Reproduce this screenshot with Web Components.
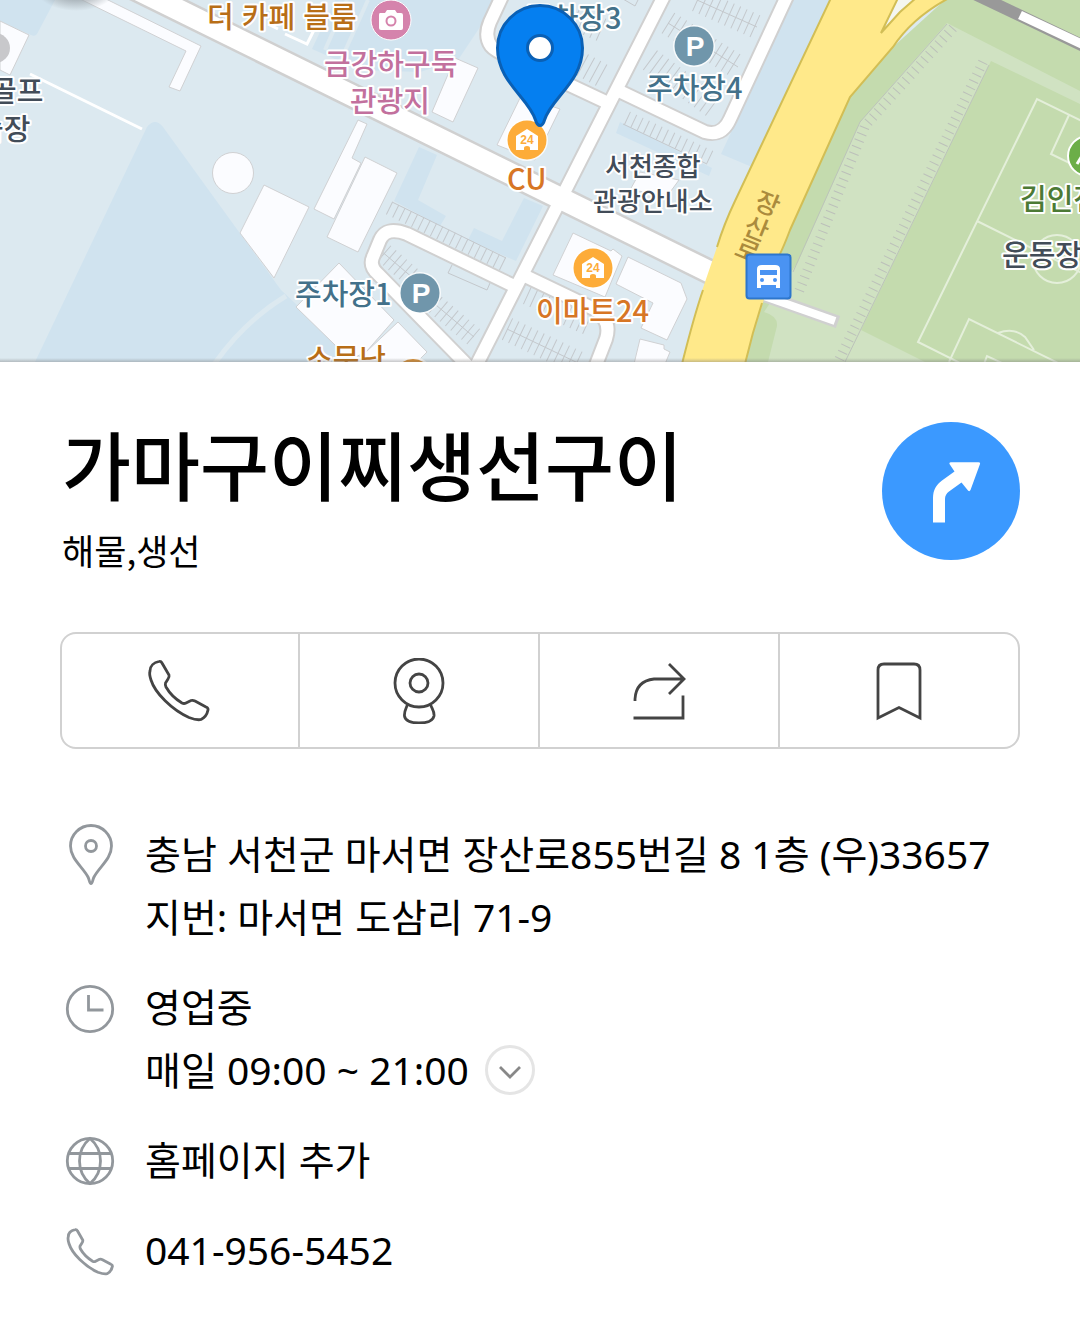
<!DOCTYPE html>
<html lang="ko">
<head>
<meta charset="utf-8">
<meta name="viewport" content="width=device-width, initial-scale=1">
<title>가마구이찌생선구이</title>
<style>
  body {
    margin: 0;
    background-color: #fff;
    color: #000;
    font-family: "Noto Sans CJK KR", sans-serif;
  }
</style>
</head>
<body>
<place-map></place-map>
<place-sheet>
  <place-header slot="header">
    <span slot="name">가마구이찌생선구이</span>
    <span slot="category">해물,생선</span>
  </place-header>
  <action-bar slot="actions">
    <action-button icon="phone" label="전화"></action-button>
    <action-button icon="roadview" label="로드뷰"></action-button>
    <action-button icon="share" label="공유"></action-button>
    <action-button icon="bookmark" label="저장"></action-button>
  </action-bar>
  <info-row icon="pin">
    <div>충남 서천군 마서면 장산로855번길 8 1층 (우)33657</div>
    <div>지번: 마서면 도삼리 71-9</div>
  </info-row>
  <info-row icon="clock">
    <div>영업중</div>
    <open-hours>매일 09:00 ~ 21:00</open-hours>
  </info-row>
  <info-row icon="globe" href="#homepage">홈페이지 추가</info-row>
  <info-row icon="tel" href="tel:041-956-5452">041-956-5452</info-row>
</place-sheet>

<script>
const PHONE = "M3 13C3 8 7 4.500 12 3.500Q14 3 15 5L22 17Q22.500 19 21 21L18.500 25Q18 27 19 29C23 36 30 42 35 45Q37 46 39 45L44 42.500Q46 42 48 43L59 49Q61.500 50 61 52C60 57 57 60 54 61.500C50 62.500 46 61 42 59.500C25 52 8 35 4 22Q2 16 3 13Z";

const ICONS = {
  phone: `<svg width="64" height="66" viewBox="0 0 64 66"><path d="${PHONE}"/></svg>`,
  roadview: `<svg width="64" height="66" viewBox="0 0 64 66"><circle cx="32" cy="25" r="24"/><circle cx="32" cy="25" r="9"/><path d="M20.500 46.500C19 51 17 53 17.500 58C18 63 25 65 32 65S46 63 47 58C47.500 53 45 51 43.500 46.500"/></svg>`,
  share: `<svg width="64" height="66" viewBox="0 0 64 66"><path d="M8 43V41Q9 23 27 21H57M42 6L57 21L42 36M6.500 60H56V37.500"/></svg>`,
  bookmark: `<svg width="64" height="66" viewBox="0 0 64 66"><path d="M10 60V12Q10 6 16 6H46Q52 6 52 12V60L31 49.500Z"/></svg>`,
  pin: `<svg width="60" height="63" viewBox="0 0 60 63"><path d="M31 59.500C29.500 59.500 29.500 56 28 53C23 43 10.500 35 10.500 22A20.500 20.500 0 0 1 51.500 22C51.500 35 39 43 34 53C32.500 56 32.500 59.500 31 59.500Z"/><circle cx="31" cy="22" r="5.500"/></svg>`,
  clock: `<svg width="60" height="63" viewBox="0 0 60 63"><circle cx="30" cy="32" r="22.700"/><path d="M28.500 18V33H43.500"/></svg>`,
  globe: `<svg width="60" height="63" viewBox="0 0 60 63"><circle cx="30" cy="31" r="22.700"/><path d="M9 23.500H51M9 38.500H51M30 8.500C16 20 16 42 30 53.500C44 42 44 20 30 8.500Z"/></svg>`,
  tel: `<svg width="60" height="63" viewBox="0 0 60 63"><g transform="translate(6 7) scale(.76)"><path stroke-width="3.700" d="${PHONE}"/></g></svg>`
};

const iconStyle = `
  svg {
    display: block;
    fill: none;
    stroke: currentColor;
    stroke-width: 2.800;
  }
`;

// Map canvas: land, buildings, parking bays, roads, then labels and markers
class PlaceMap extends HTMLElement {
  constructor() {
    super();
    const shadow = this.attachShadow({ mode: "open" });

    shadow.innerHTML = `
      <style>
        :host {
          display: block;
          background-color: #dce9f0;
        }

        svg {
          display: block;
          width: 100%;
          height: 362px;
        }

        .dark { fill: #d0e3ef; }
        .house { fill: #fbfcff; stroke: #d0d1d3; stroke-width: 1; }
        .bay { fill: none; stroke: #c4c8cc; stroke-dasharray: 1 6; }
        .bay-line { fill: none; stroke: #c4c8cc; stroke-width: 1; }
        .edge { fill: none; stroke: #d0d0d0; stroke-linejoin: round; }
        .road { fill: none; stroke: #fff; stroke-linejoin: round; }
        .yellow { fill: none; stroke: #d2be55; stroke-width: 2; }
        .pitch { fill: none; stroke: #e4efda; stroke-width: 2; }

        text {
          font-size: 29px;
          font-weight: 500;
          paint-order: stroke;
          stroke: #fff;
          stroke-width: 4px;
          stroke-linejoin: round;
        }

        .brown { fill: #b86e17; }
        .orange { fill: #d77625; }
        .pink { fill: #c2709d; }
        .teal { fill: #43718a; }
        .grey { fill: #424c58; }
        .green { fill: #4c7a35; }
        .small { font-size: 26px; }
        .street { font-size: 26px; fill: #ab8b3d; stroke: #ffe98a; stroke-width: 2px; }
        .glyph { font-family: "Liberation Sans", sans-serif; font-weight: 700; stroke: none; }
      </style>

      <svg viewBox="0 0 1080 362" preserveAspectRatio="xMidYMid slice" role="img" aria-label="지도">
        <defs>
          <radialGradient id="blob">
            <stop offset="0.500" stop-color="#9aa3a9" stop-opacity=".8"/>
            <stop offset="1" stop-color="#9aa3a9" stop-opacity="0"/>
          </radialGradient>
          <linearGradient id="shade" x1="0" y1="0" x2="0" y2="1">
            <stop offset="0" stop-color="#777" stop-opacity="0"/>
            <stop offset="1" stop-color="#777" stop-opacity=".4"/>
          </linearGradient>
          <g id="store">
            <circle r="21" fill="#fff" opacity=".8"/>
            <circle r="19.500" fill="#fdac39"/>
            <path fill="#fff" d="M-11-4L0-11L11-4V10H3V8A3 2 0 0 0-3 8V10H-11Z"/>
            <text class="glyph" y="4" text-anchor="middle" style="font-size:12px" fill="#fdac39">24</text>
          </g>
          <g id="parking">
            <circle r="21" fill="#fff" opacity=".8"/>
            <circle r="19.500" fill="#7096ab"/>
            <text class="glyph" x="1" y="10" text-anchor="middle" style="font-size:28px" fill="#fff">P</text>
          </g>
        </defs>

        <path class="dark" d="M0 0H55L37 34Q35 37 31 35L0 21ZM35 362L147 127Q155 117 163 127L281 290L345 350V362ZM312 49L335 0H498L458 60L420 72L360 70ZM419 147L437 155L418 200L446 216L440 226L394 201ZM474 228L502 241L524 198L543 206L516 261L468 240ZM793 0H830L752 167L721 154ZM620 122L712 168L709 176L616 133Z"/>
        <path d="M286 296Q243 322 213 366" fill="none" stroke="#dce9f0" stroke-width="5"/>
        <path d="M341 60L368 0M347 0L325 50" stroke="#dce9f0" stroke-width="4" fill="none"/>

        <path class="house" d="M0 21L29 35L10 75L0 70ZM78-2H104L201 46L180 91L169 87L186 51ZM264 185L309 207L274 278L240 233ZM358 120L367 124L352 158L361 163L334 219L314 209ZM365 157L397 173L358 252L327 237ZM339 263L394 320L366 352L345 362L335 345L296 307ZM398 322L427 352L415 364H350L366 352ZM455 58L478 68L453 122L432 112ZM521 96L560 109L535 160L497 145ZM573 233L611 251L613 249L622 256L605 297L553 275ZM628 257L681 283L687 299L667 340L641 328L653 303L616 284ZM640 339L664 345V349L670 352L665 364H634ZM640 172L679 180L668 195L630 190Z"/>
        <circle class="house" cx="233" cy="173" r="20.500"/>
        <path d="M30 74L142 129" stroke="#fff" stroke-width="3"/>
        <path d="M285 34L307 44L315 28M268 24L278 29" fill="none" stroke="#fff" stroke-width="3"/>
        <circle cx="-5" cy="48" r="15" fill="#c8c8cb"/>

        <path class="bay" stroke-width="14" d="M389 208L503 264M627 118L714 159"/>
        <path class="bay" stroke-width="20" d="M384 253L420 284M430 300L474 337"/>
        <path class="bay" stroke-width="24" d="M507 329L578 363M528 293L552 304M568 314L590 324M697 0L757 27M668 23L738 67M650 60L714 107M570 58L603 76M575 18L602 30"/>
        <path class="bay-line" d="M392 202L506 258M623 124L707 164M380 250L420 284M430 300L474 337M507 329L578 363M697 0L757 27M668 23L738 67M452 265L448 273L487 290L490 283M623 -1L635 6L640 -4"/>

        <!-- side roads -->
        <path class="edge" stroke-width="16" d="M665 -6L474 370M504 -8L490 22Q484 36 491 46Q495 51 510 57L608 103M788 -6L730 119Q722 137 705 132L617 90M512 285L407 234Q386 226 380 240L373 257Q369 266 378 274L468 366M521 274L594 309Q612 320 606 339L594 370"/>
        <path class="edge" stroke-width="26" d="M128 -15L712 273"/>
        <path class="road" stroke-width="12" d="M665 -6L474 370M504 -8L490 22Q484 36 491 46Q495 51 510 57L608 103M788 -6L730 119Q722 137 705 132L617 90M512 285L407 234Q386 226 380 240L373 257Q369 266 378 274L468 366M521 274L594 309Q612 320 606 339L594 370"/>
        <path class="road" stroke-width="21" d="M128 -15L720 277"/>

        <!-- park -->
        <path fill="#c4dbae" d="M947 -2H1082V364H743L762 303L790 230L850 97L893 47Z"/>
        <path fill="#d0e2c2" d="M947 23L1080 91V104L991 61L861 330L925 362H768L777 326Q778 316 764 312L780 288L798 262L860 122Z"/>
        <path fill="none" stroke="#bcc3ba" d="M947 24L860 122L793 272M989 65L844 364"/>
        <path class="bay" style="stroke:#bcc0ba" stroke-width="10" d="M953 28L865 126L798 294M983 62L839 360"/>
        <path class="pitch" d="M1082 121L1037 99L918 342L960 363M977 221L1082 273M1069 115L1051 154L1082 169M949 362L969 319L1060 364M998 333Q1014 327 1025 337L1034 350M984 364L987 356L1004 364"/>
        <circle class="pitch" cx="1057" cy="259" r="24"/>
        <path d="M960 -13L1090 49" stroke="#999" stroke-width="12"/>
        <path d="M1020 15L1090 48" stroke="#fff" stroke-width="9"/>

        <path d="M765 296L838 322" stroke="#d0d0d0" stroke-width="13"/>
        <path d="M764 296L835 321" stroke="#fff" stroke-width="8"/>
        <path fill="#ffe98a" d="M831 -2H897L882 33L900 12L916 -2H949Q912 18 893 47L850 97L790 230Q762 297 745 364H682Q694 316 703 288L717 247Q724 224 735 201Z"/>
        <path fill="#f4f6f0" d="M898 -2L884 30L900 11L915 -2Z"/>
        <path class="yellow" d="M831 -2L735 201Q724 224 717 247M703 290Q694 316 682 364M898 -2L881 33L900 12L916 -2M949 -2Q912 18 893 47L850 97L790 230Q784 246 779 256M762 303Q752 334 745 364"/>
        <ellipse cx="76" cy="-14" rx="42" ry="25" fill="url(#blob)"/>

        <text class="grey" x="-10" y="102">골프</text>
        <text class="grey" x="-23" y="140">습장</text>
        <text class="brown" x="207" y="28">더 카페 블룸</text>
        <text class="pink" x="324" y="75">금강하구둑</text>
        <text class="pink" x="350" y="112">관광지</text>
        <text class="teal" x="525" y="29">주차장3</text>
        <text class="teal" x="646" y="99">주차장4</text>
        <text class="teal" x="295" y="305">주차장1</text>
        <text class="grey small" x="605" y="176">서천종합</text>
        <text class="grey small" x="593" y="211">관광안내소</text>
        <text class="orange" x="507" y="190">CU</text>
        <text class="orange" x="536" y="322">이마트24</text>
        <text class="brown" x="306" y="370">소문난</text>
        <text class="green" x="1020" y="210">김인전</text>
        <text class="grey" x="1002" y="266">운동장</text>
        <text class="street" x="753 742 733" y="208 233 255" rotate="22">장산로</text>

        <use href="#store" x="527" y="140"/>
        <use href="#store" x="593" y="268"/>
        <use href="#parking" x="694" y="46"/>
        <use href="#parking" x="420" y="293"/>
        <circle cx="413" cy="378" r="20" fill="#d98b2b" stroke="#fff" stroke-width="2"/>
        <circle cx="391" cy="20" r="20" fill="#d583ac" stroke="#fff" stroke-width="1"/>
        <path fill="#fff" d="M380 13H385L387 10H395L397 13H401Q403 13 403 15V28Q403 30 401 30H381Q379 30 379 28V15Q379 13 380 13Z"/>
        <circle cx="391" cy="21" r="4.500" fill="none" stroke="#d583ac" stroke-width="2"/>
        <circle cx="1088" cy="156" r="20" fill="#6cae48" stroke="#fff" stroke-width="2"/>
        <path d="M1077 164L1082 156" stroke="#fff" stroke-width="3"/>

        <!-- bus stop -->
        <rect x="746.500" y="254.500" width="44" height="44" rx="3" fill="#4a93f2" stroke="#2d76cc" stroke-width="2"/>
        <path fill="#fff" d="M757 269Q757 265 762 265H775Q780 265 780 269V288H776V285H761V288H757Z"/>
        <rect x="760" y="270" width="17" height="5" fill="#4a93f2"/>
        <circle cx="762" cy="280" r="2" fill="#4a93f2"/>
        <circle cx="775" cy="280" r="2" fill="#4a93f2"/>

        <!-- selected place -->
        <path fill="#057ff0" stroke="#0a60b5" stroke-width="3" d="M540 125.500Q537 125.500 535.500 120C529 98 497.500 82 497.500 48A42.500 42.500 0 0 1 582.500 48C582.500 82 551 98 544.500 120Q543 125.500 540 125.500Z"/>
        <circle cx="540" cy="48" r="12.500" fill="#fff" stroke="#0a60b5" stroke-width="3"/>
        <rect y="358" width="1080" height="4" fill="url(#shade)"/>
      </svg>
    `;
  }
}

class PlaceSheet extends HTMLElement {
  constructor() {
    super();
    const shadow = this.attachShadow({ mode: "open" });

    shadow.innerHTML = `
      <style>
        :host {
          display: block;
          padding: 60px 60px 40px;
        }

        .rows {
          display: flex;
          flex-direction: column;
          gap: 27px;
          margin-top: 73px;
        }
      </style>
      <slot name="header"></slot>
      <slot name="actions"></slot>
      <section class="rows"><slot></slot></section>
    `;
  }
}

class PlaceHeader extends HTMLElement {
  constructor() {
    super();
    const shadow = this.attachShadow({ mode: "open" });

    shadow.innerHTML = `
      <style>
        :host {
          display: flex;
          justify-content: space-between;
          align-items: flex-start;
          gap: 24px;
        }

        .title {
          padding-left: 2px;
        }

        h1 {
          margin: 0 0 22px;
          font-size: 75px;
          font-weight: 500;
          line-height: 82px;
        }

        p {
          margin: 0;
          font-size: 35px;
          line-height: 48px;
        }

        button {
          flex: none;
          width: 138px;
          height: 138px;
          padding: 0;
          border: 0;
          border-radius: 50%;
          background-color: #3b99ff;
        }

        svg {
          display: block;
          fill: #fff;
        }
      </style>
      <div class="title">
        <h1><slot name="name"></slot></h1>
        <p><slot name="category"></slot></p>
      </div>
      <button type="button" aria-label="길찾기">
        <svg width="138" height="138" viewBox="0 0 138 138"><path d="M51 100.500V76C51 68 54 63 60 58.500L72.500 49.500L67.500 42Q67 40.300 69 40.300H96.500Q98.500 40.300 98 42L88.500 68Q87.500 70 86 68.500L79.500 60.500L67 69.500Q63 72.500 63 77V100.500Z"/></svg>
      </button>
    `;
  }
}

class ActionBar extends HTMLElement {
  constructor() {
    super();
    const shadow = this.attachShadow({ mode: "open" });

    shadow.innerHTML = `
      <style>
        :host {
          display: grid;
          grid-template-columns: repeat(4, 1fr);
          margin-top: 58px;
          border-radius: 16px;
          box-shadow: inset 0 0 0 2px #d1d1d1;
        }

        ::slotted(:not(:last-child)) {
          border-right: 2px solid #d1d1d1;
        }
      </style>
      <slot></slot>
    `;
  }
}

class ActionButton extends HTMLElement {
  constructor() {
    super();
    const shadow = this.attachShadow({ mode: "open" });

    shadow.innerHTML = `
      <style>
        :host {
          display: block;
        }

        button {
          display: flex;
          align-items: center;
          justify-content: center;
          width: 100%;
          height: 117px;
          padding: 0;
          border: 0;
          background: none;
          color: #444;
        }
        ${iconStyle}
      </style>
      <button type="button" aria-label="${this.getAttribute("label")}">
        ${ICONS[this.getAttribute("icon")]}
      </button>
    `;
  }
}

class InfoRow extends HTMLElement {
  constructor() {
    super();
    const shadow = this.attachShadow({ mode: "open" });
    const href = this.getAttribute("href");

    shadow.innerHTML = `
      <style>
        :host {
          display: grid;
          grid-template-columns: 60px 1fr;
          column-gap: 25px;
          font-family: "Noto Sans", "Noto Sans CJK KR", sans-serif;
          font-size: 39px;
          line-height: 63px;
        }

        .icon {
          height: 61px;
          padding-top: 2px;
          color: #92979c;
        }

        a {
          color: inherit;
          text-decoration: none;
        }
        ${iconStyle}
      </style>
      <div class="icon">${ICONS[this.getAttribute("icon")]}</div>
      <div>${href ? `<a href="${href}"><slot></slot></a>` : "<slot></slot>"}</div>
    `;
  }
}

class OpenHours extends HTMLElement {
  constructor() {
    super();
    const shadow = this.attachShadow({ mode: "open" });

    shadow.innerHTML = `
      <style>
        :host {
          display: flex;
          align-items: center;
          gap: 16px;
        }

        button {
          width: 50px;
          height: 50px;
          padding: 0;
          border: 3px solid #e5e5e5;
          border-radius: 50%;
          background: none;
          color: #888;
        }
        ${iconStyle}
      </style>
      <span><slot></slot></span>
      <button type="button" aria-label="영업시간 더보기">
        <svg width="44" height="44" viewBox="0 0 44 44"><path d="M12 19L22 29L32 19"/></svg>
      </button>
    `;
  }
}

customElements.define("place-map", PlaceMap);
customElements.define("place-sheet", PlaceSheet);
customElements.define("place-header", PlaceHeader);
customElements.define("action-bar", ActionBar);
customElements.define("action-button", ActionButton);
customElements.define("info-row", InfoRow);
customElements.define("open-hours", OpenHours);
</script>
</body>
</html>
